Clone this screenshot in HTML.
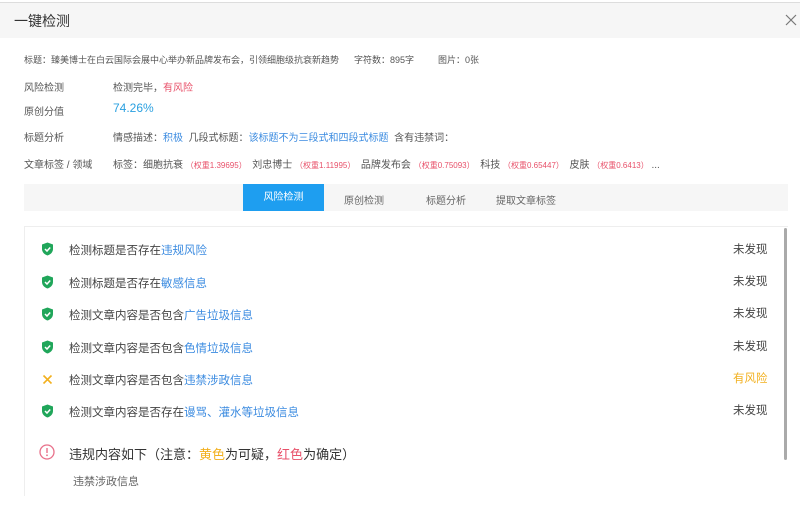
<!DOCTYPE html>
<html><head><meta charset="utf-8"><style>
*{margin:0;padding:0;box-sizing:border-box}
body{width:800px;height:509px;background:#fff;font-family:"Liberation Sans","Noto Sans CJK SC",sans-serif;color:#555;position:relative;overflow:hidden}
.a{position:absolute;white-space:nowrap}
.hd{position:absolute;left:0;top:2px;width:800px;height:36px;background:#f6f6f6;border-top:1px solid #ddd}
.s{font-size:10px}
.m{font-size:9px}
.row{font-size:11.5px;color:#444}
.st{font-size:11.5px;color:#444}
.blue{color:#3b8be0}.red{color:#e8516a}.yel{color:#f2b01e}
</style></head><body>
<div class="hd"></div>
<div class="a" style="left:14px;top:11px;font-size:14px;color:#333">一键检测</div>
<svg class="a" style="left:785px;top:14px" width="12" height="12" viewBox="0 0 12 12"><path d="M1 1l10 10M11 1L1 11" stroke="#777" stroke-width="1.2"/></svg>

<div class="a m" style="left:24px;top:53px">标题：臻美博士在白云国际会展中心举办新品牌发布会，引领细胞级抗衰新趋势</div>
<div class="a m" style="left:354px;top:53px">字符数：895字</div>
<div class="a m" style="left:438px;top:53px">图片：0张</div>

<div class="a s" style="left:24px;top:79px">风险检测</div>
<div class="a s" style="left:113px;top:79px">检测完毕，<span class="red">有风险</span></div>
<div class="a s" style="left:24px;top:103px">原创分值</div>
<div class="a" style="left:113px;top:101px;font-size:12px;color:#2aa0e0">74.26%</div>
<div class="a s" style="left:24px;top:129px">标题分析</div>
<div class="a s" style="left:113px;top:129px">情感描述：<span class="blue">积极</span>&nbsp; 几段式标题：<span class="blue">该标题不为三段式和四段式标题</span>&nbsp; 含有违禁词：</div>
<div class="a s" style="left:24px;top:156px">文章标签 / 领域</div>
<div class="a s" style="left:113px;top:156px">标签：细胞抗衰 <span class="red" style="font-size:8px">（权重1.39695）</span>&nbsp; 刘忠博士 <span class="red" style="font-size:8px">（权重1.11995）</span>&nbsp; 品牌发布会 <span class="red" style="font-size:8px">（权重0.75093）</span>&nbsp; 科技 <span class="red" style="font-size:8px">（权重0.65447）</span>&nbsp; 皮肤 <span class="red" style="font-size:8px">（权重0.6413）</span> ...</div>

<div class="a" style="left:24px;top:184px;width:764px;height:27px;background:#f6f6f6"></div>
<div class="a" style="left:243px;top:184px;width:81px;height:27px;background:#1e9ef0;color:#fff;font-size:10px;text-align:center;line-height:27px">风险检测</div>
<div class="a s" style="left:344px;top:192px;color:#666">原创检测</div>
<div class="a s" style="left:426px;top:192px;color:#666">标题分析</div>
<div class="a s" style="left:496px;top:192px;color:#666">提取文章标签</div>

<div class="a" style="left:24px;top:226px;width:764px;height:270px;border:1px solid #eee;border-right:none;border-bottom:none"></div>
<div class="a" style="left:784px;top:228px;width:3px;height:232px;background:#aaa;border-radius:2px"></div>

<svg class="a" style="left:41px;top:242px" width="13" height="14" viewBox="0 0 13 14"><path d="M6.5 0.5L12 2.5V7c0 3.2-2.5 5.5-5.5 6.5C3.5 12.5 1 10.2 1 7V2.5z" fill="#20a65a"/><path d="M4 7l2 2 3.2-3.5" stroke="#fff" stroke-width="1.5" fill="none"/></svg>
<div class="a row" style="left:69px;top:242px">检测标题是否存在<span class="blue">违规风险</span></div>
<div class="a st" style="left:733px;top:241px">未发现</div>

<svg class="a" style="left:41px;top:275px" width="13" height="14" viewBox="0 0 13 14"><path d="M6.5 0.5L12 2.5V7c0 3.2-2.5 5.5-5.5 6.5C3.5 12.5 1 10.2 1 7V2.5z" fill="#20a65a"/><path d="M4 7l2 2 3.2-3.5" stroke="#fff" stroke-width="1.5" fill="none"/></svg>
<div class="a row" style="left:69px;top:275px">检测标题是否存在<span class="blue">敏感信息</span></div>
<div class="a st" style="left:733px;top:273px">未发现</div>

<svg class="a" style="left:41px;top:307px" width="13" height="14" viewBox="0 0 13 14"><path d="M6.5 0.5L12 2.5V7c0 3.2-2.5 5.5-5.5 6.5C3.5 12.5 1 10.2 1 7V2.5z" fill="#20a65a"/><path d="M4 7l2 2 3.2-3.5" stroke="#fff" stroke-width="1.5" fill="none"/></svg>
<div class="a row" style="left:69px;top:307px">检测文章内容是否包含<span class="blue">广告垃圾信息</span></div>
<div class="a st" style="left:733px;top:305px">未发现</div>

<svg class="a" style="left:41px;top:340px" width="13" height="14" viewBox="0 0 13 14"><path d="M6.5 0.5L12 2.5V7c0 3.2-2.5 5.5-5.5 6.5C3.5 12.5 1 10.2 1 7V2.5z" fill="#20a65a"/><path d="M4 7l2 2 3.2-3.5" stroke="#fff" stroke-width="1.5" fill="none"/></svg>
<div class="a row" style="left:69px;top:340px">检测文章内容是否包含<span class="blue">色情垃圾信息</span></div>
<div class="a st" style="left:733px;top:338px">未发现</div>

<svg class="a" style="left:42px;top:374px" width="11" height="11" viewBox="0 0 11 11"><path d="M1.5 1.5l8 8M9.5 1.5l-8 8" stroke="#f2b01e" stroke-width="1.6"/></svg>
<div class="a row" style="left:69px;top:372px">检测文章内容是否包含<span class="blue">违禁涉政信息</span></div>
<div class="a st yel" style="left:733px;top:370px">有风险</div>

<svg class="a" style="left:41px;top:404px" width="13" height="14" viewBox="0 0 13 14"><path d="M6.5 0.5L12 2.5V7c0 3.2-2.5 5.5-5.5 6.5C3.5 12.5 1 10.2 1 7V2.5z" fill="#20a65a"/><path d="M4 7l2 2 3.2-3.5" stroke="#fff" stroke-width="1.5" fill="none"/></svg>
<div class="a row" style="left:69px;top:404px">检测文章内容是否存在<span class="blue">谩骂、灌水等垃圾信息</span></div>
<div class="a st" style="left:733px;top:402px">未发现</div>

<svg class="a" style="left:39px;top:444px" width="16" height="16" viewBox="0 0 16 16"><circle cx="8" cy="8" r="7" fill="none" stroke="#e8708a" stroke-width="1.3"/><path d="M8 4v5" stroke="#e8708a" stroke-width="1.4"/><circle cx="8" cy="11.3" r="0.9" fill="#e8708a"/></svg>
<div class="a" style="left:69px;top:444px;font-size:13px;color:#333">违规内容如下（注意：<span class="yel">黄色</span>为可疑，<span class="red">红色</span>为确定）</div>
<div class="a" style="left:73px;top:473px;font-size:11px;color:#666">违禁涉政信息</div>
</body></html>
